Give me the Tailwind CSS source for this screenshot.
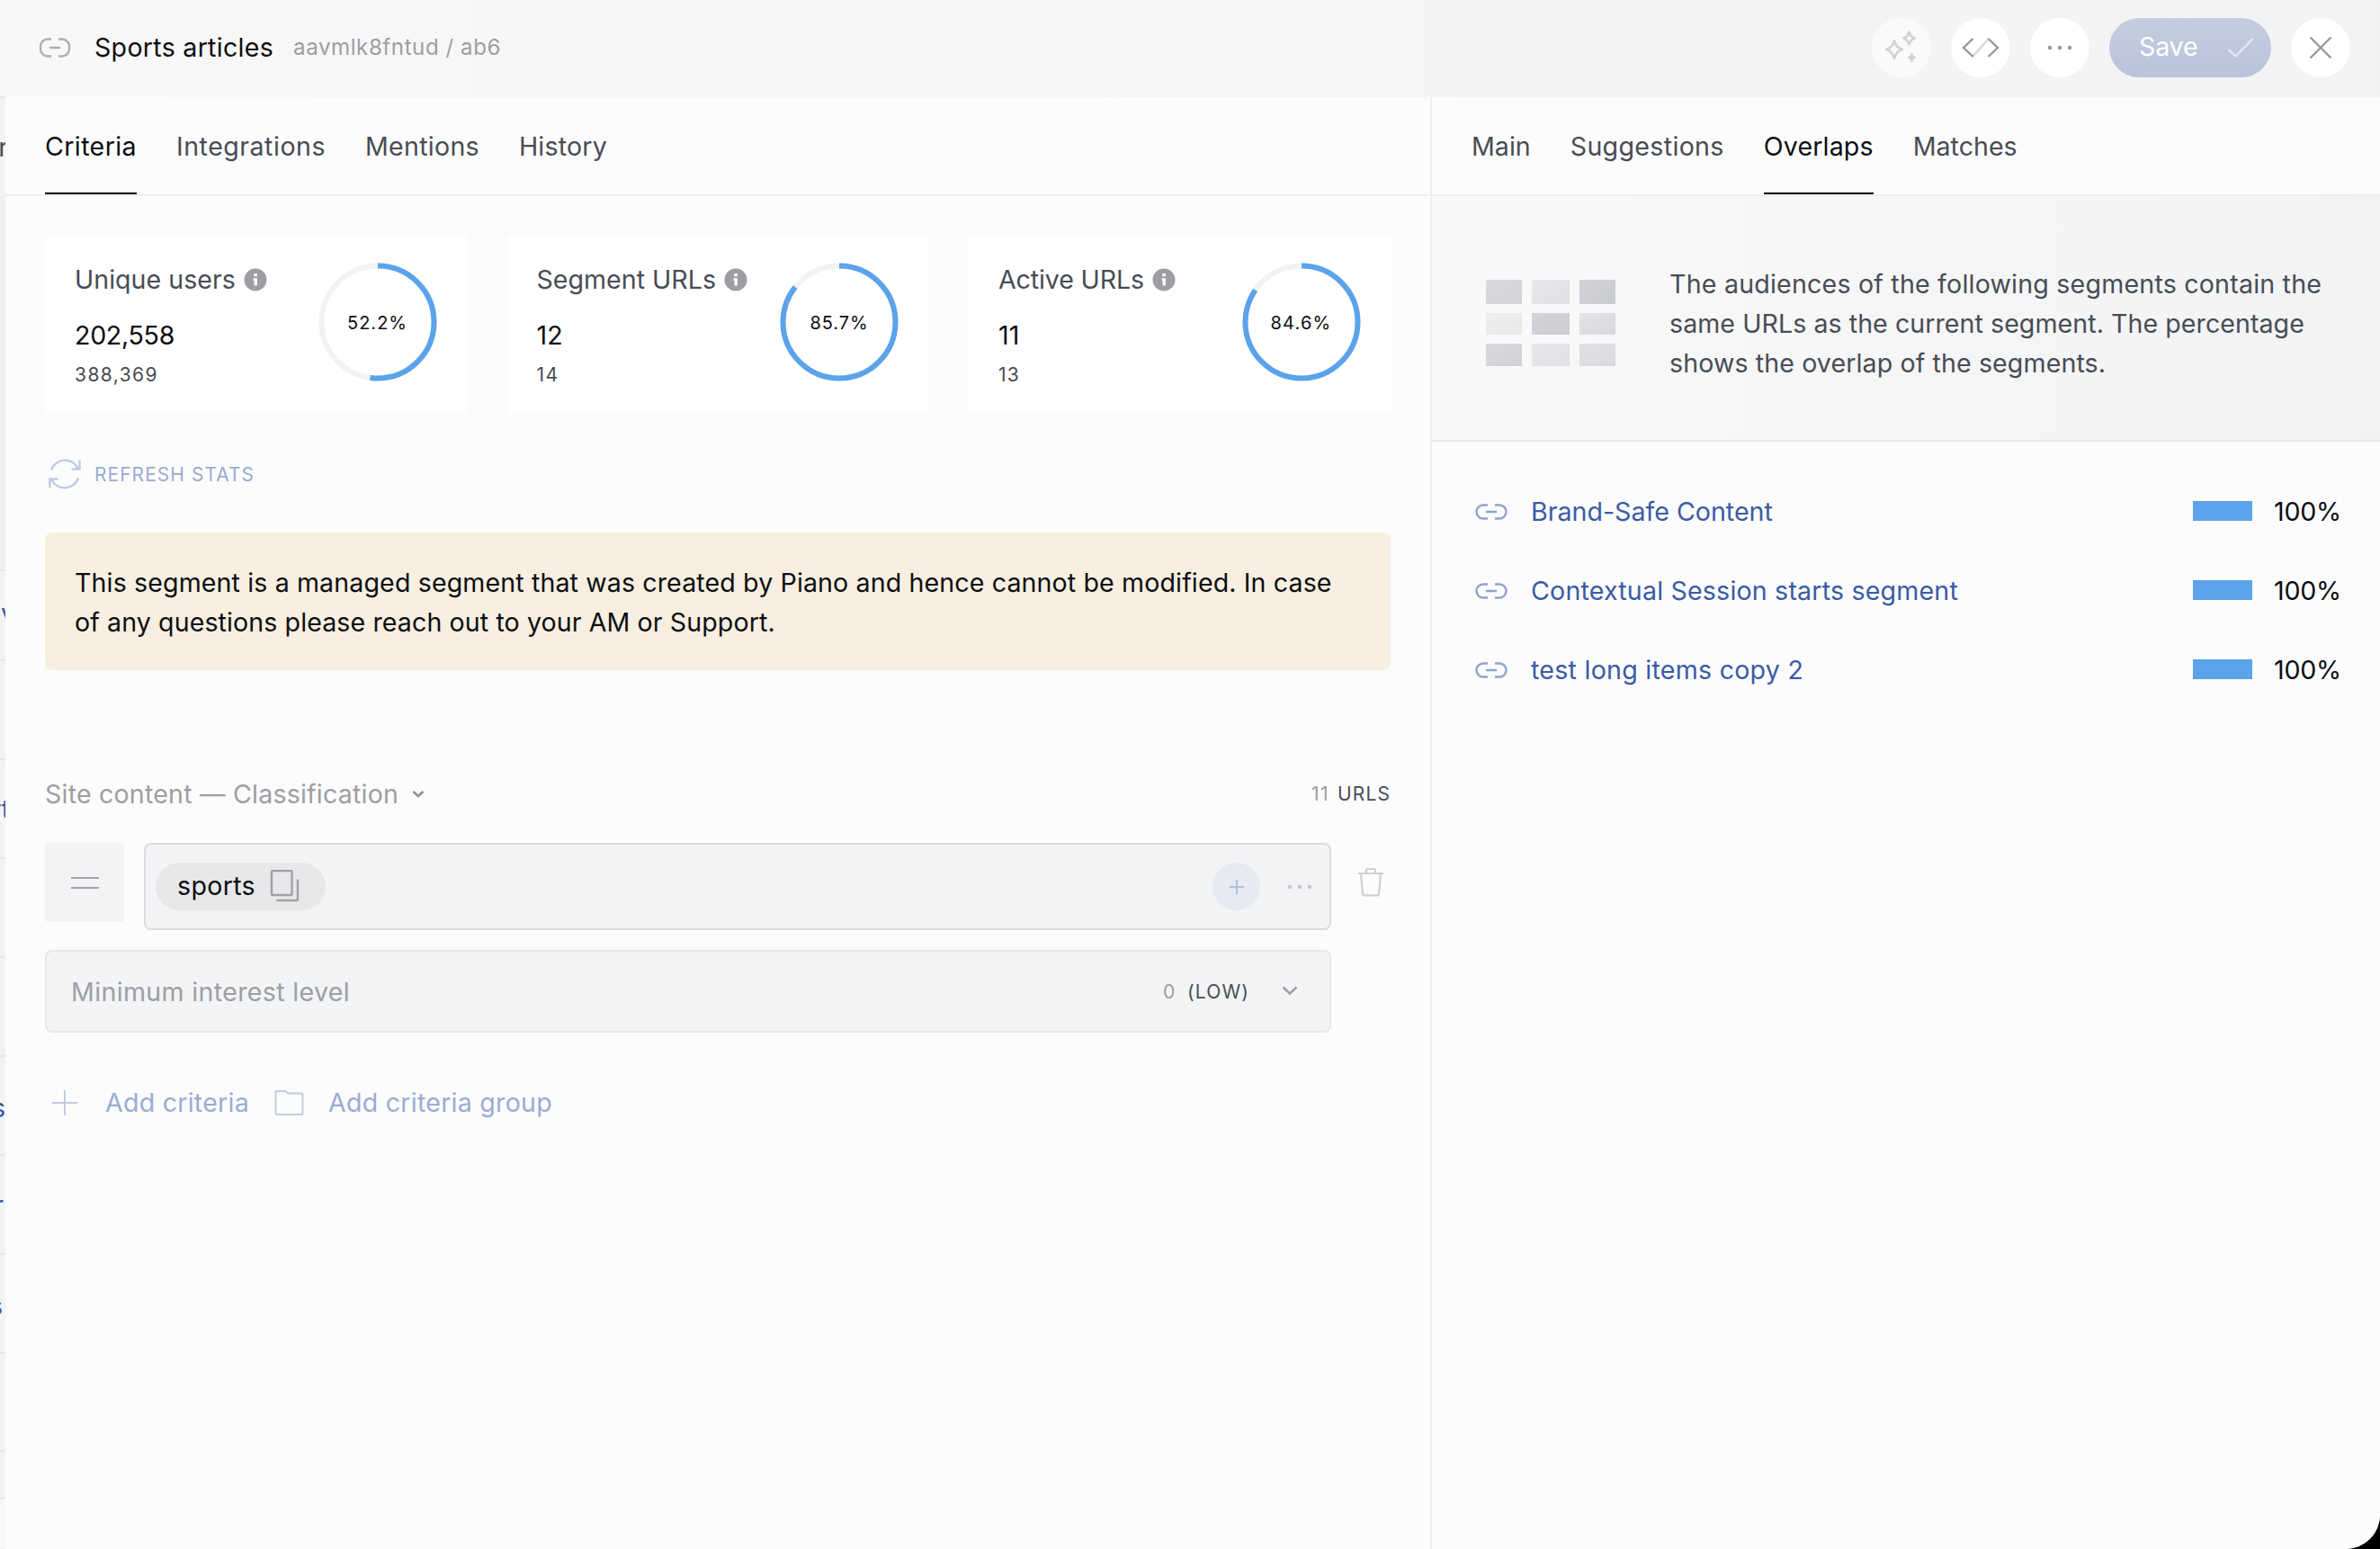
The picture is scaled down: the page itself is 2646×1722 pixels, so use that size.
<!DOCTYPE html>
<html lang="en">

<head>
    <meta charset="UTF-8">
    <meta name="viewport" content="width=device-width, initial-scale=1.0">
    <title>Sports articles</title>
    <script src="https://cdn.jsdelivr.net/npm/@tailwindcss/browser@4"></script>
</head>

<body class="bg-black font-['Inter',sans-serif] text-[28.6px] leading-[44px] text-[#0c0e12]">
    <div class="flex w-[2646px] h-[1722px] overflow-hidden bg-[#f3f3f5] rounded-br-[38px]">

        <!-- Edge of the segment list behind the panel -->
        <div class="relative w-[6px] shrink-0 overflow-hidden text-[#3556a0]">
            <div class="h-[109px] bg-[#f8f9f9] border-b-2 border-[#e6e7e9]"></div>
            <div class="h-[109px]"></div>
            <div class="h-[417px] bg-[#f0f0f1] border-b-2 border-[#e6e7e9]"></div>
            <div class="h-[100px] border-b-2 border-[#e6e7e9]"></div>
            <div class="h-[110px] border-b-2 border-[#e6e7e9]"></div>
            <div class="h-[110px] border-b-2 border-[#e6e7e9]"></div>
            <div class="h-[110px] border-b-2 border-[#e6e7e9]"></div>
            <div class="h-[110px] border-b-2 border-[#e6e7e9]"></div>
            <div class="h-[110px] border-b-2 border-[#e6e7e9]"></div>
            <div class="h-[110px] border-b-2 border-[#e6e7e9]"></div>
            <div class="h-[110px] border-b-2 border-[#e6e7e9]"></div>
            <div class="h-[109px] border-b-2 border-[#e6e7e9]"></div>
            <div class="h-[53px] border-b-2 border-[#e6e7e9]"></div>
            <div class="h-[54px] bg-[#f8f8f9]"></div>
            <span class="absolute top-[142px] right-[-3px] text-[#484c55]">r</span>
            <span class="absolute top-[660px] left-[1px]">v</span>
            <span class="absolute top-[878px] right-[-5px]">rt</span>
            <span class="absolute top-[1210px] right-0">s</span>
            <span class="absolute top-[1318px] right-[2px]">r</span>
            <span class="absolute top-[1430px] right-[3px] font-medium">s</span>
        </div>

        <div class="flex-1 flex flex-col bg-[#fcfcfc]">
            <!-- Header -->
            <header class="h-[108px] flex items-center pl-[37px] pr-[33px] pb-[2px] bg-linear-to-r from-[#f8f8f8] to-[#f3f3f4]">
                <svg class="w-[36px] h-[22px]" viewBox="0 0 36 22" fill="none" stroke="#adafb3" stroke-width="2.4">
                    <path d="M14 1.500h-4a8 8 0 0 0-8 8v3a8 8 0 0 0 8 8h4M22 1.500h4a8 8 0 0 1 8 8v3a8 8 0 0 1-8 8h-4M12 11h12" />
                </svg>
                <h1 class="ml-[26px] tracking-[0.270px]">Sports articles</h1>
                <span class="ml-[22px] text-[24.2px] tracking-[0.520px] text-[#9d9fa3]">aavmlk8fntud / ab6</span>
                <div class="ml-auto flex gap-[22px]">
                    <button class="size-[66px] rounded-full bg-[#fafafa] flex items-center justify-center">
                        <svg class="size-[44px]" viewBox="0 0 44 44" fill="none" stroke="#d0d2d5" stroke-width="2.6">
                            <path d="M14 13.500Q15.500 22.500 23.500 24Q15.500 25.500 14 34.500Q12.500 25.500 4.500 24Q12.500 22.500 14 13.500ZM30.500 4Q31.500 10.500 37.500 11.500Q31.500 12.500 30.500 19Q29.500 12.500 23.500 11.500Q29.500 10.500 30.500 4Z" />
                            <path d="M33.500 27.500Q34 32 38 33Q34 34 33.500 38.500Q33 34 29 33Q33 32 33.500 27.500Z" fill="#d0d2d5" stroke-width="1" />
                        </svg>
                    </button>
                    <button class="size-[66px] rounded-full bg-white flex items-center justify-center">
                        <svg class="size-[44px]" viewBox="0 0 44 44" fill="none" stroke="#96989c" stroke-width="2.4">
                            <path d="M31 12 13 32" stroke="#d6d7d9" />
                            <path d="M13.500 12 3 22l10.500 10M30.500 12 41 22 30.500 32" />
                        </svg>
                    </button>
                    <button class="size-[66px] rounded-full bg-white flex items-center justify-center">
                        <svg class="size-[44px]" viewBox="0 0 44 44" fill="#96989c">
                            <circle cx="11" cy="22" r="2.200" />
                            <circle cx="22" cy="22" r="2.200" />
                            <circle cx="33" cy="22" r="2.200" />
                        </svg>
                    </button>
                    <button class="w-[180px] h-[66px] rounded-full pl-[33px] pr-[19px] flex items-center justify-between bg-linear-to-b from-[#c4cde0] to-[#bbc3d9] text-white">
                        <span class="pb-[2px] tracking-[-0.200px]">Save</span>
                        <svg class="w-[30px] h-[24px]" viewBox="0 0 30 24" fill="none" stroke="#e6eaf2" stroke-width="2.2">
                            <path d="M1.500 14 9.500 21.500 28.500 2" />
                        </svg>
                    </button>
                    <button class="size-[66px] rounded-full bg-white flex items-center justify-center">
                        <svg class="size-[44px]" viewBox="0 0 44 44" fill="none" stroke="#96989c" stroke-width="2.4">
                            <path d="M10.500 10.500l23 23M33.500 10.500l-23 23" />
                        </svg>
                    </button>
                </div>
            </header>

            <div class="flex-1 flex">
                <!-- Criteria column -->
                <main class="w-[1584px] shrink-0">
                    <nav class="h-[110px] flex gap-[44px] pl-[44px] border-b-2 border-[#eef0f0] text-[#484c55]">
                        <a class="h-[108px] leading-[110px] tracking-[0.380px] border-b-2 border-black text-[#0c0e12]">Criteria</a>
                        <a class="leading-[110px] tracking-[0.490px]">Integrations</a>
                        <a class="leading-[110px] tracking-[0.270px]">Mentions</a>
                        <a class="leading-[110px] tracking-[0.170px]">History</a>
                    </nav>

                    <div class="flex gap-[44px] pl-[44px] pt-[44px]">
                        <div class="w-[469.5px] h-[198px] bg-white flex justify-between pl-[33px] pr-[34px] pt-[27px]">
                            <div>
                                <div class="flex items-center gap-[9px] text-[#484c55]">Unique users
                                    <svg class="size-[26px]" viewBox="0 0 26 26"><circle cx="13" cy="13" r="12.500" fill="#9d9ea2" /><path d="M11.300 6h3.600v3.300h-3.600zM10.700 11.300h4.200v8.200h-3.300v-5.500h-.900z" fill="#fff" /></svg>
                                </div>
                                <div class="mt-[18px] tracking-[-0.310px]">202,558</div>
                                <div class="text-[21px] tracking-[1.430px] text-[#484c55]">388,369</div>
                            </div>
                            <div class="grid size-[132px] mt-[3px] place-items-center text-[21px]">
                                <svg class="col-start-1 row-start-1 size-[132px] -rotate-90" viewBox="0 0 132 132" fill="none" stroke-width="6">
                                    <circle cx="66" cy="66" r="62.500" stroke="#f2f2f3" />
                                    <circle cx="66" cy="66" r="62.500" stroke="#5ba3ea" pathLength="100" stroke-dasharray="52.200 100" />
                                </svg>
                                <span class="col-start-1 row-start-1 pt-[2px] text-[20px] tracking-[1px]">52.2%</span>
                            </div>
                        </div>
                        <div class="w-[469.5px] h-[198px] bg-white flex justify-between pl-[33px] pr-[34px] pt-[27px]">
                            <div>
                                <div class="flex items-center gap-[9px] text-[#484c55]">Segment URLs
                                    <svg class="size-[26px]" viewBox="0 0 26 26"><circle cx="13" cy="13" r="12.500" fill="#9d9ea2" /><path d="M11.300 6h3.600v3.300h-3.600zM10.700 11.300h4.200v8.200h-3.300v-5.500h-.900z" fill="#fff" /></svg>
                                </div>
                                <div class="mt-[18px]">12</div>
                                <div class="text-[21px] tracking-[1.450px] text-[#484c55]">14</div>
                            </div>
                            <div class="grid size-[132px] mt-[3px] place-items-center text-[21px]">
                                <svg class="col-start-1 row-start-1 size-[132px] -rotate-90" viewBox="0 0 132 132" fill="none" stroke-width="6">
                                    <circle cx="66" cy="66" r="62.500" stroke="#f2f2f3" />
                                    <circle cx="66" cy="66" r="62.500" stroke="#5ba3ea" pathLength="100" stroke-dasharray="85.700 100" />
                                </svg>
                                <span class="col-start-1 row-start-1 pt-[2px] text-[20px] tracking-[0.900px]">85.7%</span>
                            </div>
                        </div>
                        <div class="w-[469.5px] h-[198px] bg-white flex justify-between pl-[33px] pr-[34px] pt-[27px]">
                            <div>
                                <div class="flex items-center gap-[9px] tracking-[-0.140px] text-[#484c55]">Active URLs
                                    <svg class="size-[26px]" viewBox="0 0 26 26"><circle cx="13" cy="13" r="12.500" fill="#9d9ea2" /><path d="M11.300 6h3.600v3.300h-3.600zM10.700 11.300h4.200v8.200h-3.300v-5.500h-.900z" fill="#fff" /></svg>
                                </div>
                                <div class="mt-[18px]">11</div>
                                <div class="text-[21px] tracking-[1.240px] text-[#484c55]">13</div>
                            </div>
                            <div class="grid size-[132px] mt-[3px] place-items-center text-[21px]">
                                <svg class="col-start-1 row-start-1 size-[132px] -rotate-90" viewBox="0 0 132 132" fill="none" stroke-width="6">
                                    <circle cx="66" cy="66" r="62.500" stroke="#f2f2f3" />
                                    <circle cx="66" cy="66" r="62.500" stroke="#5ba3ea" pathLength="100" stroke-dasharray="84.600 100" />
                                </svg>
                                <span class="col-start-1 row-start-1 pt-[2px] text-[20px] tracking-[1.200px]">84.6%</span>
                            </div>
                        </div>
                    </div>

                    <button class="mt-[44px] ml-[44px] flex items-center text-[21px] text-[#9aacd3]">
                        <svg class="size-[44px]" viewBox="0 0 44 44" fill="none" stroke="#c0cbe3" stroke-width="2.400">
                            <path d="M7 17.500A16 16 0 0 1 36.500 15.500M38.500 6.500V16.500H29.500M37 26.500A16 16 0 0 1 7.500 28.500M5.500 37.500V27.500H14.500" />
                        </svg>
                        <span class="ml-[11px] pt-[2px] tracking-[1.030px]">REFRESH STATS</span>
                    </button>

                    <p class="mt-[42px] ml-[44px] w-[1496px] h-[153px] rounded-[8px] bg-[#f8efe1] pt-[34px] pl-[33px]">
                        <span class="tracking-[0.115px]">This segment is a managed segment that was created by Piano and hence cannot be modified. In case</span><br>
                        <span class="tracking-[0.090px]">of any questions please reach out to your AM or Support.</span>
                    </p>

                    <div class="mt-[116px] ml-[44px] w-[1496px] flex items-center text-[#9d9fa3]">
                        <span class="tracking-[0.190px]">Site content — Classification</span>
                        <svg class="ml-[15px] w-[14px] h-[8px]" viewBox="0 0 14 8" fill="none" stroke="#8f9195" stroke-width="2.600"><path d="M1.500 1 7 6l5.500-5" /></svg>
                        <span class="ml-auto text-[21px] tracking-[1.450px]">11</span>
                        <span class="ml-[9px] text-[21px] tracking-[1.130px] text-[#484c55]">URLS</span>
                    </div>

                    <div class="mt-[32px] ml-[44px] flex">
                        <div class="size-[88px] rounded-[4px] bg-[#f3f3f5] flex flex-col justify-center items-center gap-[9px]">
                            <div class="w-[31px] h-[2px] bg-[#a2a4a8]"></div>
                            <div class="w-[31px] h-[2px] bg-[#a2a4a8]"></div>
                        </div>
                        <div class="ml-[22px] w-[1320px] h-[97px] rounded-[8px] border-2 border-[#dbdcdd] bg-[#f3f4f6] flex items-start pt-[20px] pl-[11px] pr-[11px]">
                            <div class="w-[189px] h-[53px] rounded-full bg-[#e8e8ea] flex items-center pl-[24px]">
                                <span class="pb-[2px] tracking-[0.310px]">sports</span>
                                <svg class="ml-[16px] w-[34px] h-[38px]" viewBox="0 0 34 38" fill="none" stroke="#a0a1a5" stroke-width="2.400">
                                    <rect x="2" y="1" width="22.500" height="27" rx="1" /><path d="M31 10.500v22.500a1 1 0 0 1-1 1H7.500" />
                                </svg>
                            </div>
                            <div class="ml-auto size-[53px] rounded-full bg-[#e7eaf0] flex items-center justify-center">
                                <svg class="size-[16px]" viewBox="0 0 16 16" stroke="#b3c0dd" stroke-width="2"><path d="M8 0v16M0 8h16" /></svg>
                            </div>
                            <svg class="ml-[22px] w-[44px] h-[53px]" viewBox="0 0 44 53" fill="#c5c6c9">
                                <circle cx="11" cy="27" r="2.200" /><circle cx="22" cy="27" r="2.200" /><circle cx="33" cy="27" r="2.200" />
                            </svg>
                        </div>
                        <svg class="ml-[22px] size-[44px] mt-[22px]" viewBox="0 0 44 44" fill="none" stroke="#cfd0d2" stroke-width="2.200">
                            <path d="M8 12h28M17 11.500v-3a1.500 1.500 0 0 1 1.500-1.500h7a1.500 1.500 0 0 1 1.500 1.500v3M11 12l2 23a1.500 1.500 0 0 0 1.500 1.300h15a1.500 1.500 0 0 0 1.500-1.300l2-23" />
                        </svg>
                    </div>

                    <div class="mt-[22px] ml-[44px] w-[1430px] h-[92px] rounded-[8px] border-2 border-[#e6e7e8] bg-[#f3f4f6] flex items-center pl-[27px] pr-[35px] pt-[2px] text-[#9d9fa3]">
                        <span class="tracking-[0.330px]">Minimum interest level</span>
                        <span class="ml-auto text-[21px] tracking-[1.750px]">0</span>
                        <span class="ml-[12px] text-[21px] tracking-[1.130px] text-[#484c55]">(LOW)</span>
                        <svg class="ml-[36px] mb-[3px] w-[18px] h-[11px]" viewBox="0 0 18 11" fill="none" stroke="#9d9fa3" stroke-width="2.400"><path d="M1.500 1.500 9 8.500l7.500-7" /></svg>
                    </div>

                    <div class="mt-[54px] ml-[44px] flex items-center text-[#9aacd3]">
                        <svg class="size-[44px]" viewBox="0 0 44 44" stroke="#c0cbe3" stroke-width="2"><path d="M22 9v28M8 23h28" /></svg>
                        <span class="ml-[23px] pt-[2px] tracking-[0.230px]">Add criteria</span>
                        <svg class="ml-[22px] size-[44px]" viewBox="0 0 44 44" fill="none" stroke="#c0cbe3" stroke-width="2"><path d="M7.500 11a1 1 0 0 1 1-1H18l3.500 2.500h14.500a1.500 1.500 0 0 1 1.500 1.500v20.500a1.500 1.500 0 0 1-1.500 1.500h-27a1.500 1.500 0 0 1-1.500-1.500z" /></svg>
                        <span class="ml-[22px] pt-[2px] tracking-[0.240px]">Add criteria group</span>
                    </div>
                </main>

                <!-- Overlaps column -->
                <aside class="flex-1 border-l-2 border-[#eef0f0]">
                    <nav class="h-[110px] flex gap-[44px] pl-[44px] border-b-2 border-[#eef0f0] text-[#484c55]">
                        <a class="leading-[110px]">Main</a>
                        <a class="leading-[110px] tracking-[0.320px]">Suggestions</a>
                        <a class="h-[108px] leading-[110px] tracking-[0.140px] border-b-2 border-black text-[#0c0e12]">Overlaps</a>
                        <a class="leading-[110px]">Matches</a>
                    </nav>
                    <div class="h-[273px] flex border-b-2 border-[#e8e9ea] bg-linear-to-r from-[#f9f9f9] to-[#f2f3f4]">
                        <div class="mt-[93px] ml-[60px] w-[144px] h-[96px] grid grid-cols-[40px_42px_40px] grid-rows-[27px_24px_25px] gap-x-[11px] gap-y-[10px]">
                            <div class="bg-linear-to-br from-[#d9dadf] to-[#d3d4d9]"></div>
                            <div class="bg-linear-to-br from-[#e7e8eb] to-[#dfe0e4]"></div>
                            <div class="bg-linear-to-br from-[#d3d4d8] to-[#c9cbd1]"></div>
                            <div class="bg-linear-to-br from-[#eeeff0] to-[#e7e8ea]"></div>
                            <div class="bg-linear-to-br from-[#d3d4d9] to-[#cccdd3]"></div>
                            <div class="bg-linear-to-br from-[#e3e4e7] to-[#d8d9dd]"></div>
                            <div class="bg-linear-to-br from-[#d9dadf] to-[#d0d1d6]"></div>
                            <div class="bg-linear-to-br from-[#e6e7ea] to-[#e0e1e5]"></div>
                            <div class="bg-linear-to-br from-[#e1e2e5] to-[#d9dadd]"></div>
                        </div>
                        <p class="ml-[60px] pt-[76px] text-[#484c55]">
                            <span class="tracking-[0.200px]">The audiences of the following segments contain the</span><br>
                            <span class="tracking-[0.050px]">same URLs as the current segment. The percentage</span><br>
                            <span class="tracking-[0.100px]">shows the overlap of the segments.</span>
                        </p>
                    </div>
                    <ul class="pt-[56px] pl-[44px] pr-[43px] flex flex-col gap-[44px] text-[#3a5ba5]">
                        <li class="flex items-center">
                            <svg class="ml-[4px] w-[36px] h-[18px]" viewBox="0 0 36 18" fill="none" stroke="#8fa3cd" stroke-width="2.400"><path d="M14 1.500h-5a7.500 7.500 0 0 0 0 15h5M22 1.500h5a7.500 7.500 0 0 1 0 15h-5M12 9h12" /></svg>
                            <span class="ml-[26px]">Brand-Safe Content</span>
                            <div class="ml-auto mb-[2px] w-[66px] h-[22px] bg-[#5ba3ea]"></div>
                            <span class="ml-[24px] tracking-[-0.200px] text-[#0c0e12]">100%</span>
                        </li>
                        <li class="flex items-center">
                            <svg class="ml-[4px] w-[36px] h-[18px]" viewBox="0 0 36 18" fill="none" stroke="#8fa3cd" stroke-width="2.400"><path d="M14 1.500h-5a7.500 7.500 0 0 0 0 15h5M22 1.500h5a7.500 7.500 0 0 1 0 15h-5M12 9h12" /></svg>
                            <span class="ml-[26px] tracking-[0.180px]">Contextual Session starts segment</span>
                            <div class="ml-auto mb-[2px] w-[66px] h-[22px] bg-[#5ba3ea]"></div>
                            <span class="ml-[24px] tracking-[-0.200px] text-[#0c0e12]">100%</span>
                        </li>
                        <li class="flex items-center">
                            <svg class="ml-[4px] w-[36px] h-[18px]" viewBox="0 0 36 18" fill="none" stroke="#8fa3cd" stroke-width="2.400"><path d="M14 1.500h-5a7.500 7.500 0 0 0 0 15h5M22 1.500h5a7.500 7.500 0 0 1 0 15h-5M12 9h12" /></svg>
                            <span class="ml-[26px] tracking-[0.250px]">test long items copy 2</span>
                            <div class="ml-auto mb-[2px] w-[66px] h-[22px] bg-[#5ba3ea]"></div>
                            <span class="ml-[24px] tracking-[-0.200px] text-[#0c0e12]">100%</span>
                        </li>
                    </ul>
                </aside>
            </div>
        </div>
    </div>
</body>

</html>
